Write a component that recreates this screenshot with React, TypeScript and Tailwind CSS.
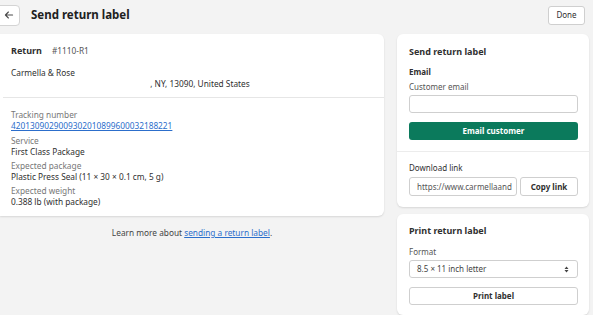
import React from "react";

export default function App() {
  const font = { fontFamily: '"Noto Sans", "Open Sans", Arial, sans-serif' };
  return (
    <div className="w-[593px] h-[315px] overflow-hidden bg-[#f3f3f3] text-[#303030]" style={font}>
      {/* Header */}
      <div className="flex items-center h-[30px] pr-[8px]">
        <div className="ml-[-6px] w-[26px] h-[21px] bg-white border border-[#d4d4d4] rounded-[4px] flex items-center justify-center">
          <svg width="12" height="12" viewBox="0 0 20 20" className="ml-[4px]">
            <path d="M16 10H4M9 5l-5 5 5 5" stroke="#4a4a4a" strokeWidth="1.8" fill="none" strokeLinecap="round" strokeLinejoin="round" />
          </svg>
        </div>
        <div className="ml-[11px] text-[11.5px] font-bold text-[#202020]">Send return label</div>
        <div className="ml-auto w-[37px] h-[19px] bg-white border border-[#cfcfcf] rounded-[3px] text-[8px] flex items-center justify-center">Done</div>
      </div>

      <div className="flex mt-[4px] gap-[13px]">
        {/* Left column */}
        <div className="w-[384px] flex flex-col">
          <div className="bg-white rounded-r-[6px] shadow-[0_1px_2px_rgba(0,0,0,0.12)] h-[182px]">
            <div className="px-[11px] pt-[11px] pb-[8px] text-[8.3px]">
              <div className="flex items-center gap-[10px] leading-[12px]">
                <span className="font-bold text-[9px]">Return</span>
                <span className="text-[#555]">#1110-R1</span>
              </div>
              <div className="mt-[10px] leading-[11px]">Carmella &amp; Rose</div>
              <div className="leading-[11px]"><span className="text-white">1234 Sample Street, Liverpool, 1308</span>, NY, 13090, United States</div>
            </div>
            <div className="h-px bg-[#e6e6e6] ml-[3px]" />
            <div className="px-[11px] pt-[12px] text-[8.3px] leading-[10.5px]">
              <div className="text-[#777]">Tracking number</div>
              <div className="text-[#2c6ecb] underline">4201309029009302010899600032188221</div>
              <div className="mt-[5px] text-[#777]">Service</div>
              <div>First Class Package</div>
              <div className="mt-[4px] text-[#777]">Expected package</div>
              <div>Plastic Press Seal (11 × 30 × 0.1 cm, 5 g)</div>
              <div className="mt-[4px] text-[#777]">Expected weight</div>
              <div>0.388 lb (with package)</div>
            </div>
          </div>
          <div className="mt-[11px] text-center text-[8.3px] text-[#444]">
            Learn more about <span className="text-[#2c6ecb] underline">sending a return label</span>.
          </div>
        </div>

        {/* Right column */}
        <div className="w-[192px] flex flex-col gap-[7px]">
          <div className="bg-white rounded-[6px] shadow-[0_1px_2px_rgba(0,0,0,0.12)]">
            <div className="pl-[12px] pr-[11px] pt-[12px] pb-[11px]">
              <div className="text-[9px] font-bold leading-[12px]">Send return label</div>
              <div className="mt-[9px] text-[8px] font-bold leading-[10px]">Email</div>
              <div className="mt-[5px] text-[8px] text-[#555] leading-[10px]">Customer email</div>
              <div className="mt-[3px] h-[18px] border border-[#cfcfcf] rounded-[3px]" />
              <div className="mt-[9px] h-[18px] bg-[#0b7a5c] rounded-[3px] text-white text-[8px] font-bold flex items-center justify-center">Email customer</div>
            </div>
            <div className="h-px bg-[#ececec]" />
            <div className="pl-[12px] pr-[11px] pt-[11px] pb-[11px]">
              <div className="text-[8px] leading-[10px]">Download link</div>
              <div className="mt-[4px] flex gap-[3px]">
                <div className="w-[108px] h-[19px] border border-[#cfcfcf] rounded-[3px] text-[8px] text-[#555] flex items-center pl-[7px] overflow-hidden whitespace-nowrap">https://www.carmellaand</div>
                <div className="flex-1 h-[19px] border border-[#cfcfcf] rounded-[3px] text-[8px] font-bold flex items-center justify-center">Copy link</div>
              </div>
            </div>
          </div>
          <div className="bg-white rounded-[6px] shadow-[0_1px_2px_rgba(0,0,0,0.12)] pl-[12px] pr-[11px] pt-[11px] pb-[10px]">
            <div className="text-[9px] font-bold leading-[12px]">Print return label</div>
            <div className="mt-[10px] text-[8px] text-[#555] leading-[10px]">Format</div>
            <div className="mt-[3px] h-[18px] border border-[#cfcfcf] rounded-[3px] text-[8px] text-[#444] flex items-center pl-[7px] pr-[8px]">
              <span>8.5 × 11 inch letter</span>
              <svg className="ml-auto" width="5" height="7" viewBox="0 0 5 7">
                <path d="M2.5 0.5L4.5 3H0.5z M2.5 6.5L0.5 4H4.5z" fill="#444" />
              </svg>
            </div>
            <div className="mt-[9px] h-[18px] border border-[#cfcfcf] rounded-[3px] text-[8px] font-bold flex items-center justify-center">Print label</div>
          </div>
        </div>
      </div>
    </div>
  );
}
